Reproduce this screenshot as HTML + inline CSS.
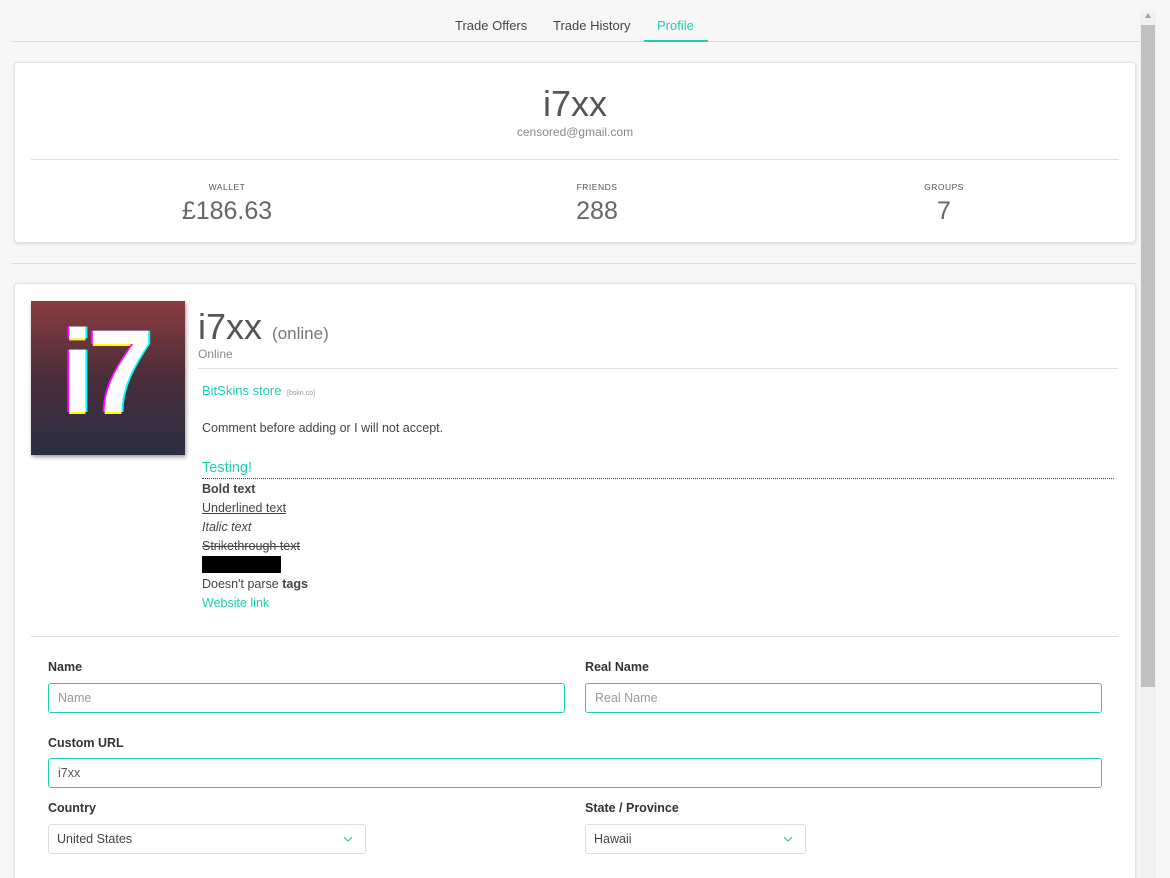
<!DOCTYPE html>
<html style="width:1170px;height:878px;overflow:hidden"><head><meta charset="utf-8"><style>
*{box-sizing:border-box;margin:0;padding:0}
body{width:1170px;height:878px;overflow:hidden;background:#f7f7f7;font-family:"Liberation Sans",sans-serif;color:#444;position:relative}
.abs{position:absolute}
.tab{position:absolute;top:18px;font-size:13px;color:#444}
.card{position:absolute;left:14px;width:1122px;background:#fff;border:1px solid #e2e2e2;border-radius:4px;box-shadow:0 1px 3px rgba(0,0,0,.12)}
.lbl{position:absolute;font-size:8.5px;letter-spacing:.5px;color:#555;text-align:center;width:200px}
.val{position:absolute;font-size:25px;color:#666;text-align:center;width:200px}
.fl{position:absolute;font-size:12.5px;font-weight:bold;color:#333}
.in{position:absolute;height:30px;border:1px solid #1dcfb1;border-radius:3px;font-size:12.5px;color:#999;padding:7px 9px}
.sel{position:absolute;height:30px;border:1px solid #ddd;border-radius:3px;font-size:12.5px;color:#444;padding:7px 8px}
.t{position:absolute;left:202px;font-size:12.5px;color:#444}
.teal{color:#1dcfb1}
</style></head><body>
<div class="tab" style="left:455px">Trade Offers</div>
<div class="tab" style="left:553px">Trade History</div>
<div class="tab" style="left:657px;color:#1dcfb1">Profile</div>
<div class="abs" style="left:11px;top:41px;width:1129px;height:1px;background:#ddd"></div>
<div class="abs" style="left:644px;top:40px;width:64px;height:2px;background:#1dcfb1"></div>
<div class="abs" style="left:1140px;top:10px;width:16px;height:868px;background:#f1f1f1"></div>
<div class="abs" style="left:1141px;top:25px;width:14px;height:662px;background:#c1c1c1"></div>
<div class="abs" style="left:1145px;top:13px;width:0;height:0;border-left:3px solid transparent;border-right:3px solid transparent;border-bottom:5px solid #a3a3a3"></div>

<div class="card" style="top:62px;height:181px">
 <div class="abs" style="left:0;width:1120px;top:20px;text-align:center;font-size:36px;color:#555">i7xx</div>
 <div class="abs" style="left:0;width:1120px;top:62px;text-align:center;font-size:12px;color:#888">censored@gmail.com</div>
 <div class="abs" style="left:16px;top:96px;width:1088px;height:1px;background:#ddd"></div>
 <div class="lbl" style="left:112px;top:119px">WALLET</div>
 <div class="val" style="left:112px;top:134px">£186.63</div>
 <div class="lbl" style="left:482px;top:119px">FRIENDS</div>
 <div class="val" style="left:482px;top:134px">288</div>
 <div class="lbl" style="left:829px;top:119px">GROUPS</div>
 <div class="val" style="left:829px;top:134px">7</div>
</div>
<div class="abs" style="left:11px;top:263px;width:1125px;height:1px;background:#ddd"></div>

<div class="card" style="top:283px;height:600px;left:14px"></div>
<div class="abs" style="left:31px;top:301px;width:154px;height:154px;background:linear-gradient(#8a3c3e,#4a2d3a 50%,#2b2e44);box-shadow:1px 2px 4px rgba(0,0,0,.4);overflow:hidden">
 <div class="abs" style="left:30px;top:12px;font-size:118px;line-height:1;font-weight:bold;color:#fff;text-shadow:-2px 0 #f0f,2px 0 #0ff,0 2px #ff0;letter-spacing:-6px">i7</div>
</div>
<div class="abs" style="left:198px;top:306px;font-size:36px;color:#555">i7xx <span style="font-size:17px;color:#777">(online)</span></div>
<div class="abs" style="left:198px;top:347px;font-size:12px;color:#888">Online</div>
<div class="abs" style="left:198px;top:368px;width:920px;height:1px;background:#ddd"></div>
<div class="t teal" style="top:383px;font-size:13px">BitSkins store <span style="font-size:7px;color:#999">&nbsp;[bskn.co]</span></div>
<div class="t" style="top:421px">Comment before adding or I will not accept.</div>
<div class="t teal" style="top:460px;font-size:14.5px">Testing!</div>
<div class="abs" style="left:202px;top:478px;width:912px;border-top:1px dotted #444"></div>
<div class="t" style="top:482px;font-weight:bold">Bold text</div>
<div class="t" style="top:501px;text-decoration:underline">Underlined text</div>
<div class="t" style="top:520px;font-style:italic">Italic text</div>
<div class="t" style="top:539px;text-decoration:line-through">Strikethrough text</div>
<div class="abs" style="left:202px;top:556px;width:79px;height:17px;background:#000"></div>
<div class="t" style="top:577px">Doesn't parse <b>tags</b></div>
<div class="t teal" style="top:596px">Website link</div>
<div class="abs" style="left:31px;top:636px;width:1087px;height:1px;background:#ddd"></div>

<div class="fl" style="left:48px;top:660px">Name</div>
<div class="in" style="left:48px;top:683px;width:517px">Name</div>
<div class="fl" style="left:585px;top:660px">Real Name</div>
<div class="in" style="left:585px;top:683px;width:517px">Real Name</div>
<div class="fl" style="left:48px;top:736px">Custom URL</div>
<div class="in" style="left:48px;top:758px;width:1054px;color:#555">i7xx</div>
<div class="fl" style="left:48px;top:801px">Country</div>
<div class="sel" style="left:48px;top:824px;width:318px">United States<svg class="abs" style="right:12px;top:11px" width="10" height="6" viewBox="0 0 10 6"><path d="M1 1l4 4 4-4" fill="none" stroke="#1dcfb1" stroke-width="1.2"/></svg></div>
<div class="fl" style="left:585px;top:801px">State / Province</div>
<div class="sel" style="left:585px;top:824px;width:221px">Hawaii<svg class="abs" style="right:12px;top:11px" width="10" height="6" viewBox="0 0 10 6"><path d="M1 1l4 4 4-4" fill="none" stroke="#1dcfb1" stroke-width="1.2"/></svg></div>
</body></html>
